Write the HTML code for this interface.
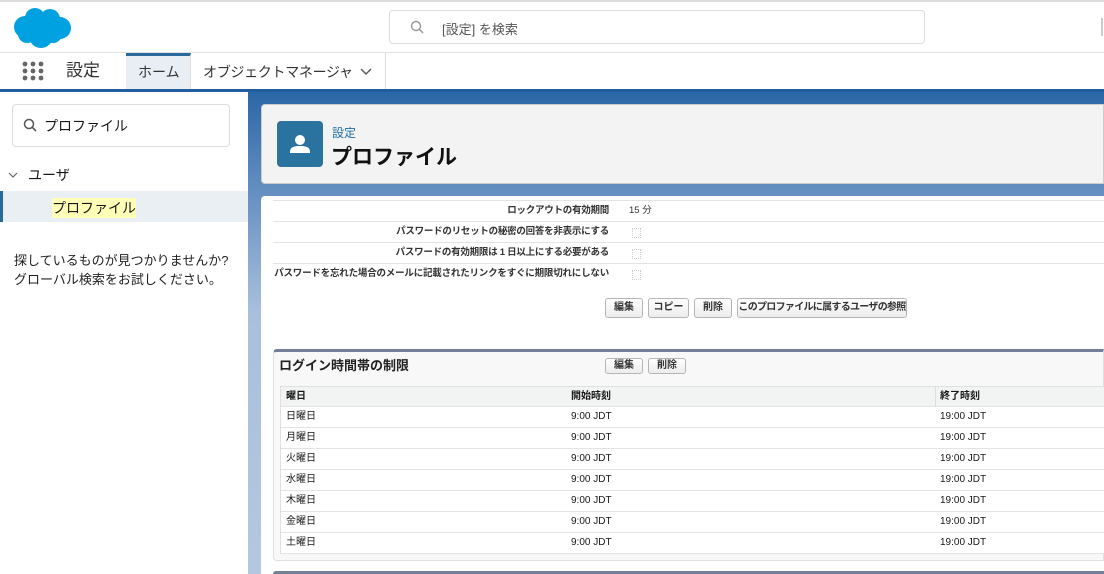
<!DOCTYPE html>
<html><head><meta charset="utf-8"><style>
*{box-sizing:border-box;margin:0;padding:0}
body{width:1104px;height:574px;overflow:hidden;position:relative;background:#fff;font-family:"Liberation Sans","Noto Sans CJK JP",sans-serif;color:#181818}
.abs{position:absolute;white-space:nowrap}
.btn{position:absolute;height:20px;border:1px solid #b5b5b5;border-radius:3px;background:linear-gradient(#fff,#ececec);font-size:10px;font-weight:bold;color:#333;text-align:center;line-height:18px;white-space:nowrap;overflow:hidden}
.row{position:absolute;left:273px;width:831px;height:21px;border-bottom:1px solid #e3e3e3;font-size:9.5px;font-weight:bold;color:#333;white-space:nowrap}
.row .l{position:absolute;right:495px;top:4px;line-height:12px;letter-spacing:-0.25px}
.row .v{position:absolute;left:356px;top:4px;line-height:12px;font-weight:normal}
.cb{position:absolute;left:359px;top:6px;width:9px;height:10px;border:1px dotted #ccc}
.tr{position:absolute;left:281px;width:823px;height:21px;border-bottom:1px solid #e3e3e3;font-size:10px;background:#fff;white-space:nowrap}
.tr span{position:absolute;top:4px;line-height:12px}
</style></head><body>
<div class="abs" style="left:0;top:0;width:1104px;height:2px;background:#ddd"></div>
<svg class="abs" style="left:13px;top:5px" width="60" height="44" viewBox="0 0 60 44"><g fill="#00a1e0"><circle cx="12" cy="22" r="11"/><circle cx="22" cy="13" r="10"/><circle cx="37" cy="14" r="10"/><circle cx="47" cy="23" r="11"/><circle cx="28" cy="31" r="12"/><circle cx="14" cy="29" r="9"/><circle cx="40" cy="29" r="9"/></g></svg>
<div class="abs" style="left:389px;top:10px;width:536px;height:34px;border:1px solid #ddd;border-radius:4px"></div>
<svg class="abs" style="left:410px;top:20px" width="14" height="14" viewBox="0 0 14 14"><circle cx="6" cy="6" r="4.5" fill="none" stroke="#999" stroke-width="1.4"/><path d="M9.3 9.3L13 13" stroke="#999" stroke-width="1.5"/></svg>
<div class="abs" style="left:442px;top:19px;font-size:13px;color:#555">[設定] を検索</div>
<div class="abs" style="left:1101px;top:18px;width:2px;height:18px;background:#ccc"></div>
<div class="abs" style="left:0;top:52px;width:1104px;height:1px;background:#e0e0e0"></div>
<svg class="abs" style="left:22px;top:61px" width="22" height="20"><g fill="#666"><circle cx="3" cy="3" r="2.4"/><circle cx="11" cy="3" r="2.4"/><circle cx="19" cy="3" r="2.4"/><circle cx="3" cy="10" r="2.4"/><circle cx="11" cy="10" r="2.4"/><circle cx="19" cy="10" r="2.4"/><circle cx="3" cy="17" r="2.4"/><circle cx="11" cy="17" r="2.4"/><circle cx="19" cy="17" r="2.4"/></g></svg>
<div class="abs" style="left:66px;top:60px;font-size:17px;line-height:22px;color:#333">設定</div>
<div class="abs" style="left:126px;top:53px;width:65px;height:36px;background:#e8eef3;border-top:3px solid #2a6a9a;border-right:1px solid #ddd"></div>
<div class="abs" style="left:138px;top:62px;font-size:14px;line-height:20px;color:#333">ホーム</div>
<div class="abs" style="left:203px;top:62px;font-size:14px;line-height:20px;color:#333;letter-spacing:-0.3px">オブジェクトマネージャ</div>
<svg class="abs" style="left:360px;top:68px" width="12" height="8"><path d="M1 1l5 5 5-5" fill="none" stroke="#555" stroke-width="1.4"/></svg>
<div class="abs" style="left:385px;top:53px;width:1px;height:36px;background:#ddd"></div>
<div class="abs" style="left:0;top:89px;width:1104px;height:3px;background:#1f5f9e"></div>
<div class="abs" style="left:12px;top:104px;width:218px;height:43px;border:1px solid #ddd;border-radius:4px"></div>
<svg class="abs" style="left:23px;top:118px" width="14" height="14" viewBox="0 0 14 14"><circle cx="6" cy="6" r="4.5" fill="none" stroke="#555" stroke-width="1.5"/><path d="M9.3 9.3L13 13" stroke="#555" stroke-width="1.6"/></svg>
<div class="abs" style="left:44px;top:116px;font-size:14px">プロファイル</div>
<svg class="abs" style="left:8px;top:172px" width="10" height="8"><path d="M1 1l4 4 4-4" fill="none" stroke="#666" stroke-width="1.2"/></svg>
<div class="abs" style="left:28px;top:165px;font-size:14px">ユーザ</div>
<div class="abs" style="left:0;top:191px;width:248px;height:31px;background:#e9eff3;border-left:3px solid #2a6a9a"></div>
<div class="abs" style="left:52px;top:198px;font-size:14px;background:#ffffb8">プロファイル</div>
<div class="abs" style="left:14px;top:251px;font-size:13px;line-height:19px;color:#222">探しているものが見つかりませんか?<br>グローバル検索をお試しください。</div>
<div class="abs" style="left:248px;top:92px;width:856px;height:482px;background:linear-gradient(#2b67a6 0px,#5f8bbf 90px,#a9bfdc 220px,#b5c7e0 482px)"></div>
<div class="abs" style="left:261px;top:104px;width:843px;height:80px;background:#f3f3f3;border-radius:4px 0 0 4px;border:1px solid #ccc"></div>
<div class="abs" style="left:277px;top:121px;width:46px;height:46px;background:#2a739f;border-radius:4px"></div>
<svg class="abs" style="left:287px;top:131px" width="26" height="26" viewBox="0 0 26 26"><circle cx="13" cy="9" r="5" fill="#fff"/><path d="M3 21c0-5 4-6 10-6s10 1 10 6v1H3z" fill="#fff"/></svg>
<div class="abs" style="left:332px;top:124px;font-size:12px;color:#1d6ca8">設定</div>
<div class="abs" style="left:331px;top:141px;font-size:21px;font-weight:bold;color:#111">プロファイル</div>
<div class="abs" style="left:261px;top:196px;width:843px;height:378px;background:#fff;border-radius:4px 0 0 0"></div>
<div class="abs" style="left:273px;top:200px;width:831px;height:1px;background:#e3e3e3"></div>
<div class="row" style="top:201px"><span class="l">ロックアウトの有効期間</span><span class="v">15 分</span></div>
<div class="row" style="top:222px"><span class="l">パスワードのリセットの秘密の回答を非表示にする</span><span class="cb"></span></div>
<div class="row" style="top:243px"><span class="l">パスワードの有効期限は 1 日以上にする必要がある</span><span class="cb"></span></div>
<div class="row" style="top:264px;border:none"><span class="l" style="letter-spacing:-0.2px">パスワードを忘れた場合のメールに記載されたリンクをすぐに期限切れにしない</span><span class="cb"></span></div>
<div class="btn" style="left:605px;top:298px;width:38px">編集</div>
<div class="btn" style="left:648px;top:298px;width:41px">コピー</div>
<div class="btn" style="left:694px;top:298px;width:38px">削除</div>
<div class="btn" style="left:737px;top:298px;width:170px;letter-spacing:-0.7px">このプロファイルに属するユーザの参照</div>
<div class="abs" style="left:273px;top:349px;width:831px;height:212px;background:#f8f8f8;border:1px solid #e0e0e0;border-top:3px solid #747e96;border-radius:4px 0 0 4px"></div>
<div class="abs" style="left:279px;top:357px;font-size:13px;line-height:18px;font-weight:bold;color:#222">ログイン時間帯の制限</div>
<div class="btn" style="left:605px;top:358px;width:38px;height:16px;line-height:14px">編集</div>
<div class="btn" style="left:648px;top:358px;width:38px;height:16px;line-height:14px">削除</div>
<div class="abs" style="left:280px;top:386px;width:824px;height:168px;border:1px solid #e0e0e0;border-right:none"></div>
<div class="tr" style="top:387px;background:#f2f3f3;font-weight:bold;height:20px"><span style="left:5px">曜日</span><span style="left:290px">開始時刻</span><span style="left:659px">終了時刻</span></div>
<div class="abs" style="left:935px;top:387px;width:1px;height:20px;background:#ddd"></div>
<div class="tr" style="top:407px"><span style="left:5px">日曜日</span><span style="left:290px">9:00 JDT</span><span style="left:659px">19:00 JDT</span></div>
<div class="tr" style="top:428px"><span style="left:5px">月曜日</span><span style="left:290px">9:00 JDT</span><span style="left:659px">19:00 JDT</span></div>
<div class="tr" style="top:449px"><span style="left:5px">火曜日</span><span style="left:290px">9:00 JDT</span><span style="left:659px">19:00 JDT</span></div>
<div class="tr" style="top:470px"><span style="left:5px">水曜日</span><span style="left:290px">9:00 JDT</span><span style="left:659px">19:00 JDT</span></div>
<div class="tr" style="top:491px"><span style="left:5px">木曜日</span><span style="left:290px">9:00 JDT</span><span style="left:659px">19:00 JDT</span></div>
<div class="tr" style="top:512px"><span style="left:5px">金曜日</span><span style="left:290px">9:00 JDT</span><span style="left:659px">19:00 JDT</span></div>
<div class="tr" style="top:533px"><span style="left:5px">土曜日</span><span style="left:290px">9:00 JDT</span><span style="left:659px">19:00 JDT</span></div>
<div class="abs" style="left:273px;top:571px;width:831px;height:3px;background:#747e96;border-radius:3px 0 0 0"></div>
</body></html>
